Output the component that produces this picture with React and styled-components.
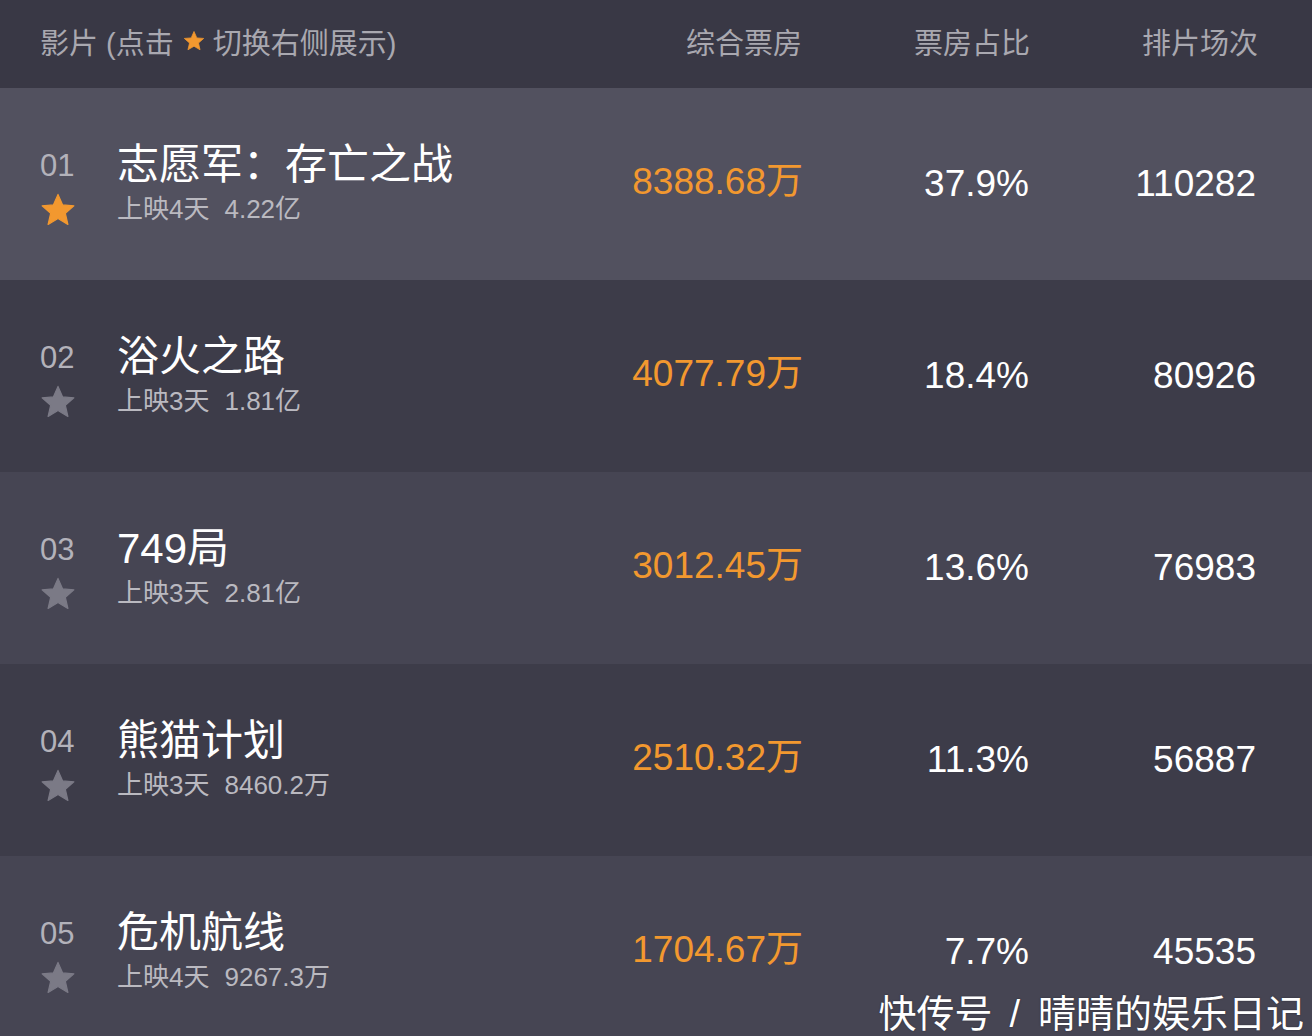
import React from 'react';
import styled, {createGlobalStyle} from 'styled-components';

const GlobalStyle = createGlobalStyle`
    html, body {
        margin: 0;
        padding: 0;
        background: #3d3c49;
        overflow: hidden;
    }
    body {
        font-family: "Liberation Sans", "Noto Sans CJK SC", sans-serif;
    }
`
const Page = styled.div`
    position: relative;
    width: 1312px;
    height: 1036px;
    overflow: hidden;
`
const Header = styled.div`
    display: flex;
    align-items: center;
    height: 82px;
    padding: 0 54px 6px 40px;
    background: #393845;
    color: #a9a8b0;
    font-size: 29px;
`
const HeaderTitle = styled.div`
    flex: 1;
    display: flex;
    align-items: center;
    white-space: pre;
`
const HeaderStar = styled.span`
    display: inline-flex;
    margin: 0 8px 0 9px;
`
const HeaderCell = styled.div`
    width: ${p => p.$w}px;
    text-align: right;
`
const Row = styled.div`
    display: flex;
    align-items: center;
    height: 192px;
    padding: 0 56px 0 40px;
    background: ${p => p.$bg};
    flex-shrink: 0;
`
const FilmCell = styled.div`
    flex: 1;
    display: grid;
    grid-template-columns: 77px auto;
    grid-template-rows: 46px 42px;
    align-items: center;
    margin-top: 4px;
`
const Rank = styled.div`
    color: #b3b2ba;
    font-size: 31px;
    line-height: 1;
`
const StarBox = styled.div`
    display: flex;
    width: 36px;
    justify-content: center;
    margin-top: 2px;
`
const Title = styled.div`
    color: #ffffff;
    font-size: 42px;
    line-height: 1;
`
const Sub = styled.div`
    color: #bab9c0;
    font-size: 26px;
    line-height: 1;
    display: flex;
`
const Gross = styled.span`
    margin-left: 15px;
`
const BoxOffice = styled.div`
    width: ${p => p.$w}px;
    text-align: right;
    color: #f2982f;
    font-size: 37px;
    margin-bottom: 13px;
`
const Value = styled.div`
    width: ${p => p.$w}px;
    text-align: right;
    color: #ffffff;
    font-size: 37px;
    margin-top: -1px;
`
const Watermark = styled.div`
    position: absolute;
    right: 8px;
    bottom: 0;
    display: flex;
    align-items: center;
    color: #ffffff;
    font-size: 38px;
    line-height: 44px;
    white-space: pre;
    text-shadow: 0 0 2px rgba(0, 0, 0, 0.35);
`
const Slash = styled.span`
    margin: 0 18px 0 17px;
`

function Star({ size, color }) {
    return (
        <svg width={size} height={size} viewBox="0 0 24 24">
            <path
                d="M12 1.6l3.1 7 7.5.6-5.7 5 1.7 7.4L12 17.7l-6.6 3.9 1.7-7.4-5.7-5 7.5-.6z"
                fill={color}
                stroke={color}
                strokeWidth="0.8"
                strokeLinejoin="round"
            />
        </svg>
    );
}

const films = [
    { rank: '01', name: '志愿军：存亡之战', days: '上映4天', total: '4.22亿', box: '8388.68万', rate: '37.9%', shows: '110282', bg: '#52515f', active: true },
    { rank: '02', name: '浴火之路', days: '上映3天', total: '1.81亿', box: '4077.79万', rate: '18.4%', shows: '80926', bg: '#3d3c49' },
    { rank: '03', name: '749局', days: '上映3天', total: '2.81亿', box: '3012.45万', rate: '13.6%', shows: '76983', bg: '#464553' },
    { rank: '04', name: '熊猫计划', days: '上映3天', total: '8460.2万', box: '2510.32万', rate: '11.3%', shows: '56887', bg: '#3d3c49' },
    { rank: '05', name: '危机航线', days: '上映4天', total: '9267.3万', box: '1704.67万', rate: '7.7%', shows: '45535', bg: '#464553' },
];

export default function App() {
    return (
        <Page>
            <GlobalStyle />
            <Header>
                <HeaderTitle>
                    影片 (点击
                    <HeaderStar><Star size={22} color="#f2982f" /></HeaderStar>
                    切换右侧展示)
                </HeaderTitle>
                <HeaderCell $w={200}>综合票房</HeaderCell>
                <HeaderCell $w={228}>票房占比</HeaderCell>
                <HeaderCell $w={228}>排片场次</HeaderCell>
            </Header>
            {films.map(f => (
                <Row key={f.rank} $bg={f.bg}>
                    <FilmCell>
                        <Rank>{f.rank}</Rank>
                        <Title>{f.name}</Title>
                        <StarBox>
                            <Star size={38} color={f.active ? '#f2982f' : '#7b7a86'} />
                        </StarBox>
                        <Sub>
                            <span>{f.days}</span>
                            <Gross>{f.total}</Gross>
                        </Sub>
                    </FilmCell>
                    <BoxOffice $w={200}>{f.box}</BoxOffice>
                    <Value $w={226}>{f.rate}</Value>
                    <Value $w={227}>{f.shows}</Value>
                </Row>
            ))}
            <Watermark>快传号<Slash>/</Slash>晴晴的娱乐日记</Watermark>
        </Page>
    );
}
